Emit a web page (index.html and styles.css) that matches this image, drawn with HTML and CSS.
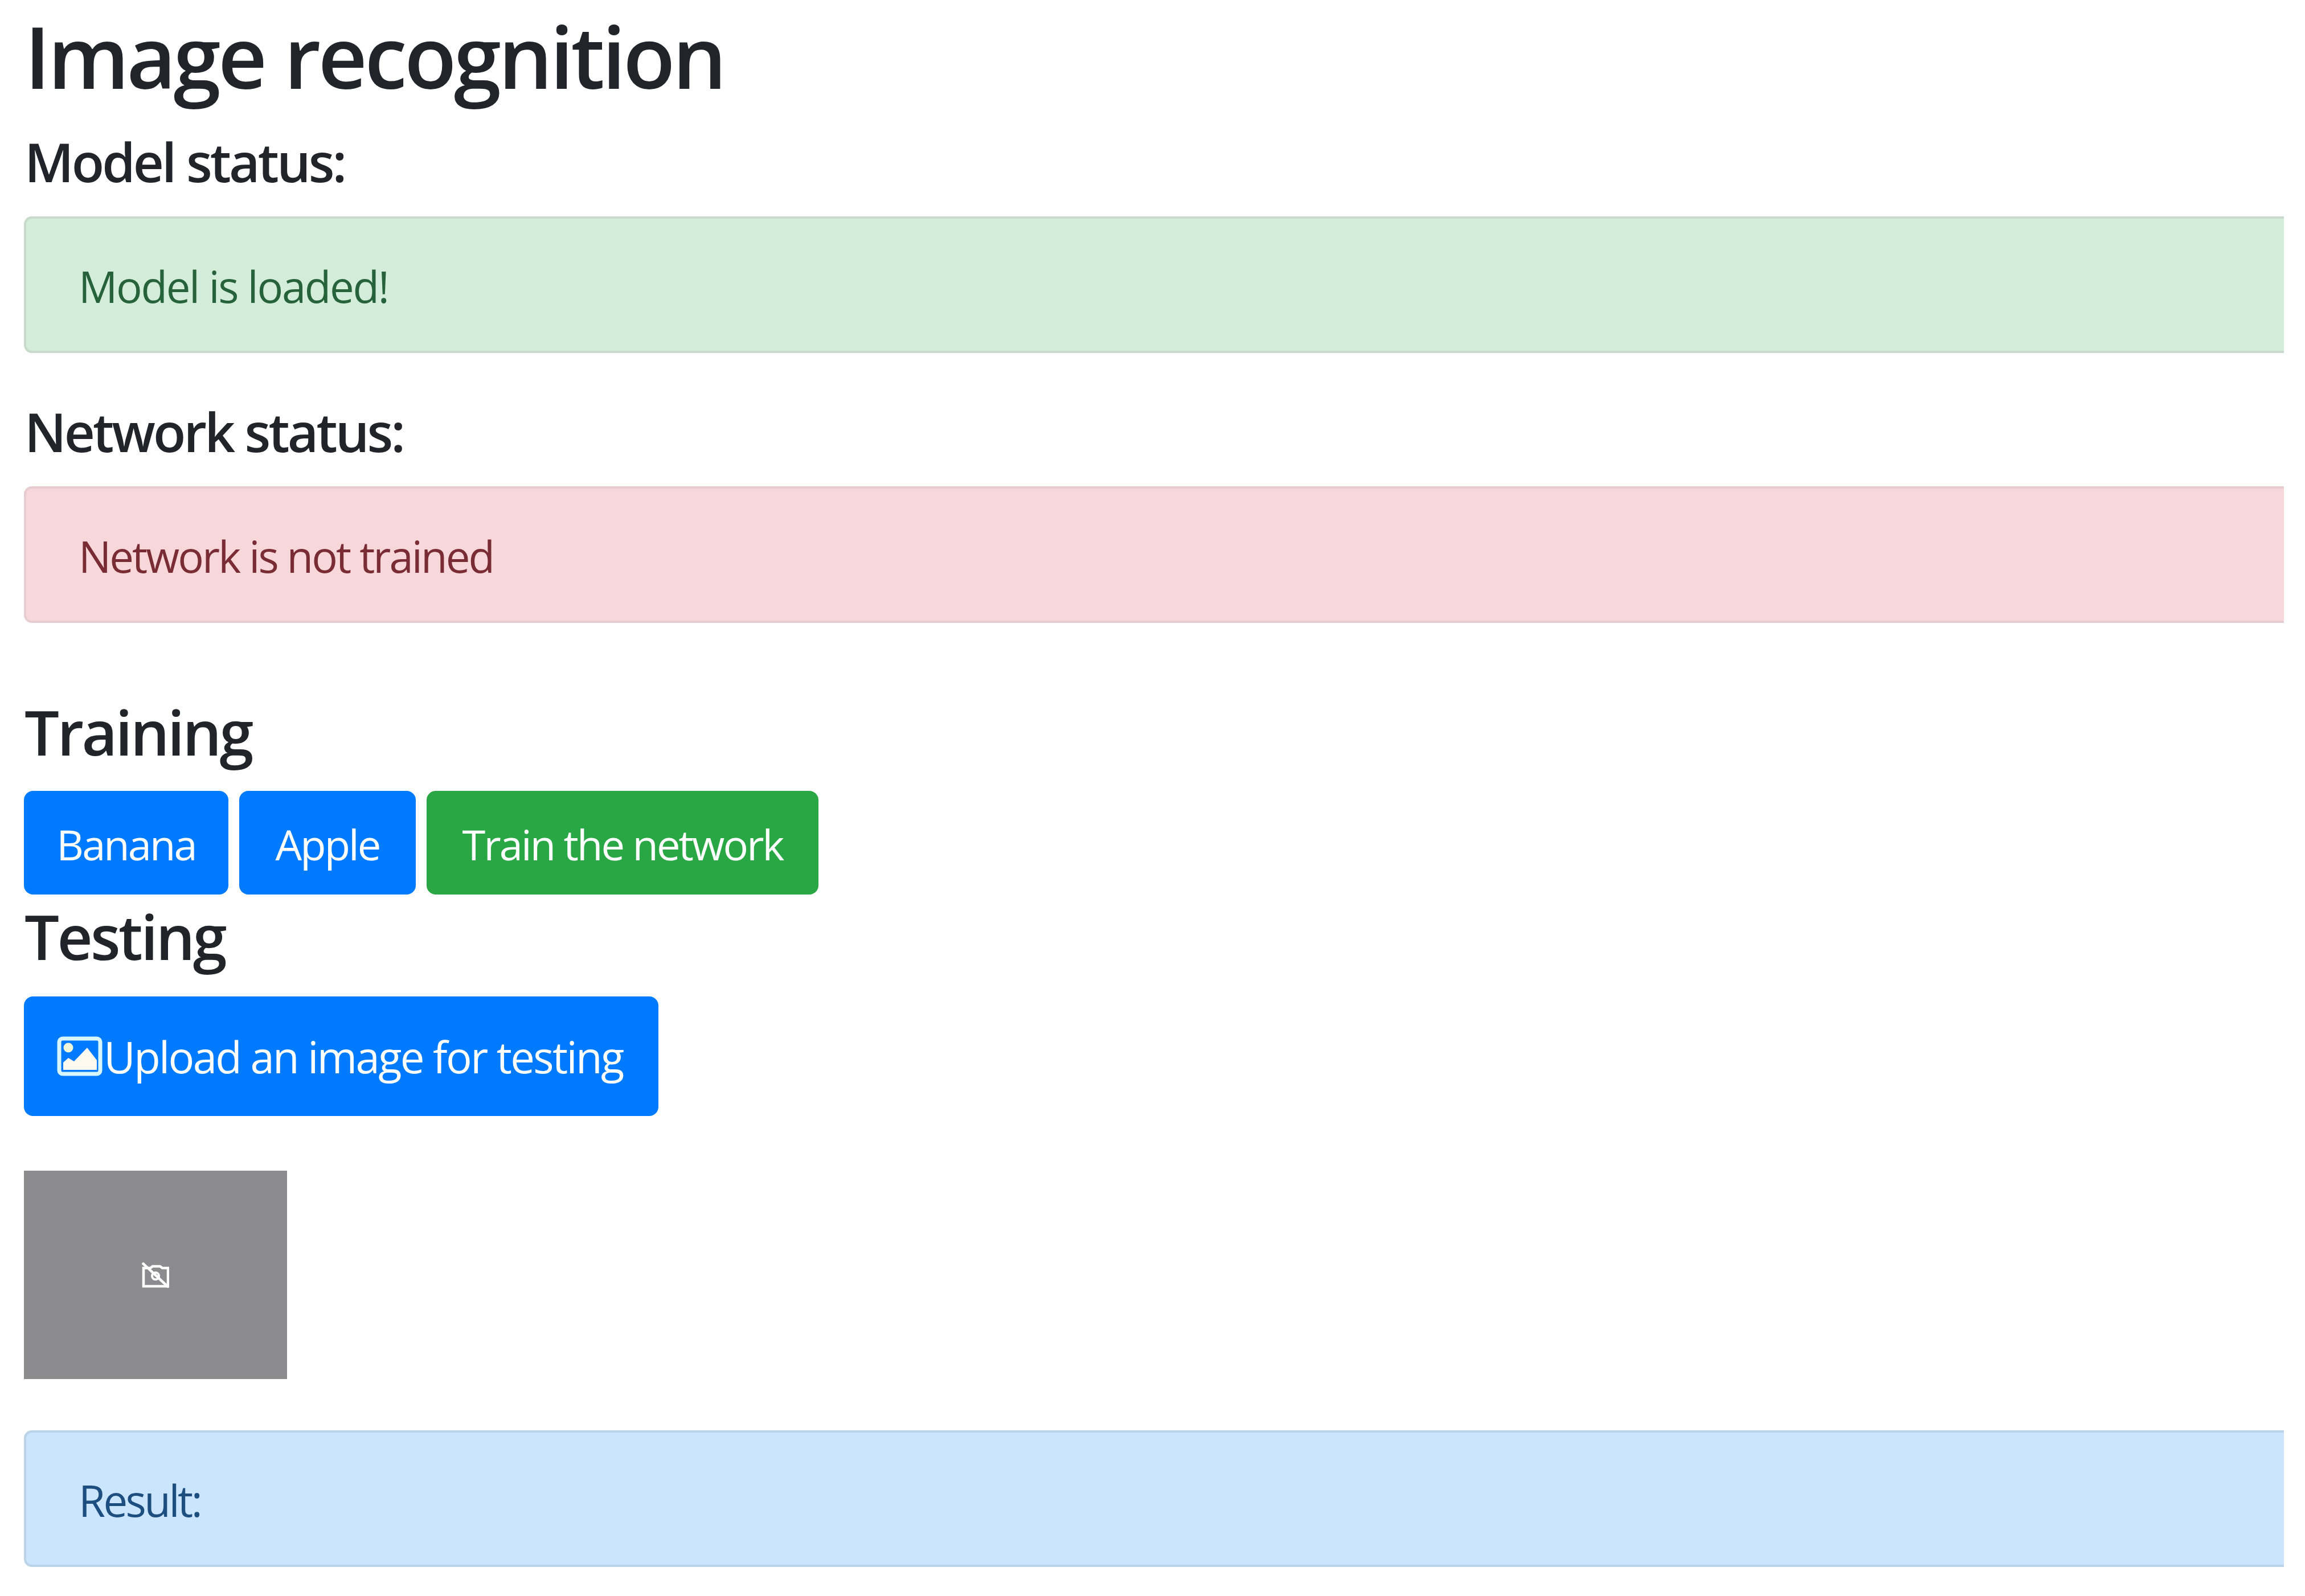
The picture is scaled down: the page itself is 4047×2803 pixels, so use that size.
FILE: index.html
```html
<!DOCTYPE html>
<html lang="en">
<head>
<meta charset="utf-8">
<title>Image recognition</title>
<link rel="stylesheet" href="styles.css">
</head>
<body>
<main class="page">
  <h1 class="title">Image recognition</h1>
  <h4 class="status-label label-model">Model status:</h4>
  <div class="alert alert-success">Model is loaded!</div>
  <h4 class="status-label label-network">Network status:</h4>
  <div class="alert alert-danger">Network is not trained</div>
  <h2 class="section section-training">Training</h2>
  <div class="btn-row">
    <button class="btn btn-primary btn-banana">Banana</button>
    <button class="btn btn-primary btn-apple">Apple</button>
    <button class="btn btn-success btn-train">Train the network</button>
  </div>
  <h2 class="section section-testing">Testing</h2>
  <button class="btn btn-primary btn-upload">
    <svg class="icon-image" viewBox="0 0 80 70" aria-hidden="true">
      <rect x="4" y="4" width="72" height="62" rx="6" fill="none" stroke="#d8f6ff" stroke-width="7"/>
      <circle cx="20" cy="20" r="8.5" fill="#f0f7d8"/>
      <path d="M11 59V46L20 38L30 44L53 20L70 42V59Z" fill="#fdf9ee"/>
    </svg>Upload an image for testing
  </button>
  <div class="preview">
    <svg class="icon-camera" viewBox="0 0 48 45" aria-hidden="true">
      <path d="M3 10H15L19 7H32L36 10H46V42H3Z" fill="none" stroke="#fff" stroke-width="4.5"/>
      <circle cx="24" cy="24" r="6" fill="none" stroke="#fff" stroke-width="4"/>
      <path d="M1 1L47 44" stroke="#fff" stroke-width="4.5"/>
    </svg>
  </div>
  <div class="alert alert-info">Result:</div>
</main>
</body>
</html>
```
FILE: styles.css
```css
* { box-sizing: border-box; }
html, body { margin: 0; padding: 0; background: #fff; }
body { width: 4047px; height: 2803px; overflow: hidden; font-family: "Open Sans", "Noto Sans", sans-serif; color: #212529; }
.page { width: 4010px; padding-left: 42px; display: flow-root; }
.title { margin: 0; padding-left: 1px; font-size: 150px; font-weight: 600; line-height: 196px; letter-spacing: -4.8px; }
.status-label { margin: 0; padding-left: 1px; font-size: 94px; font-weight: 600; line-height: 130px; letter-spacing: -3.9px; }
.label-model { margin-top: 23px; margin-bottom: 31px; }
.label-network { margin-top: 73px; margin-bottom: 31px; }
.alert { height: 240px; display: flex; align-items: center; padding: 4px 0 0 92px; font-size: 76px; border: 4px solid; border-right: 0; border-radius: 14px 0 0 14px; }
.alert-success { background: #d4edda; border-color: #c9dacd; color: #27633a; letter-spacing: -2.3px; }
.alert-danger { background: #f8d7da; border-color: #e8cdd0; color: #7a2c34; letter-spacing: -2.9px; }
.alert-info { background: #cce5ff; border-color: #bcd3e8; color: #1c4f80; letter-spacing: -3.5px; margin-top: 90px; }
.section { margin: 0; padding-left: 1px; font-size: 108px; font-weight: 600; letter-spacing: -3.6px; }
.section-training { line-height: 150px; margin-top: 117px; margin-bottom: 28px; }
.section-testing { line-height: 130px; margin-top: 9px; margin-bottom: 40px; }
.btn-row { display: flex; gap: 19px; }
.btn { display: inline-flex; align-items: center; justify-content: center; border: 0; border-radius: 16px; color: #fff; font-family: inherit; font-size: 74px; letter-spacing: -2.9px; padding: 5px 0 0; height: 182px; }
.btn-primary { background: #007bff; }
.btn-success { background: #2aa745; }
.btn-banana { width: 359px; }
.btn-apple { width: 310px; }
.btn-train { width: 688px; }
.btn-upload { display: flex; width: 1114px; height: 210px; padding: 0 4px 0 0; font-size: 76px; letter-spacing: -2.6px; }
.icon-image { width: 80px; height: 70px; margin-right: 2px; }
.preview { width: 462px; height: 366px; margin-top: 96px; background: #8c8c8e; display: flex; align-items: center; justify-content: center; }
.icon-camera { width: 48px; height: 45px; }
```
